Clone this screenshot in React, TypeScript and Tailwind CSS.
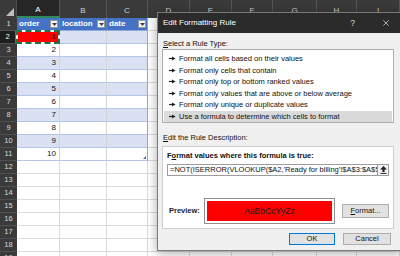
import React from 'react';
import { X } from 'lucide-react';

// Sheet columns, widths taken from the grid
const columns = [
  { label: 'A', w: 'w-[43px]' },
  { label: 'B', w: 'w-[47px]' },
  { label: 'C', w: 'w-[41px]' },
  { label: 'D', w: 'w-[42px]' },
  { label: 'E', w: 'w-[42px]' },
  { label: 'F', w: 'w-[41px]' },
  { label: 'G', w: 'w-[44px]' },
  { label: 'H', w: 'w-[40px]' },
  { label: 'I', w: 'w-[43px]' },
];

const headers = ['order', 'location', 'date'];

const ruleTypes = [
  'Format all cells based on their values',
  'Format only cells that contain',
  'Format only top or bottom ranked values',
  'Format only values that are above or below average',
  'Format only unique or duplicate values',
  'Use a formula to determine which cells to format',
];

const FilterButton = () => (
  <span className="ml-auto mr-[1px] flex h-[8px] w-[8px] shrink-0 items-center justify-center border border-[#9a9a9a] bg-[#f3f3f3]">
    <svg width="5" height="3" viewBox="0 0 5 3">
      <path d="M0 0h5L2.5 3z" fill="#404040" />
    </svg>
  </span>
);

const Bullet = () => (
  <svg width="7" height="5" viewBox="0 0 7 5" className="mr-[3px] shrink-0">
    <path d="M0 2.5h3.5" stroke="#222" strokeWidth="1.2" />
    <path d="M3 0.4L6.6 2.5L3 4.6z" fill="#222" />
  </svg>
);

const Cell = ({ row, col }: { row: number; col: number }) => {
  const w = columns[col].w;
  const inTable = col < 3 && row <= 11;

  if (inTable && row === 1) {
    return (
      <div
        className={`${w} flex h-full shrink-0 items-center border-b border-[#8eaadb] bg-[#4472c4] pl-[2px] text-[8px] font-bold text-white ${
          col === 2 ? 'border-r border-r-[#8eaadb]' : 'border-r border-r-[#5b84cc]'
        }`}
      >
        <span>{headers[col]}</span>
        <FilterButton />
      </div>
    );
  }

  if (inTable) {
    const banded = row % 2 === 0;
    const value = col === 0 ? String(row - 1) : '';
    const isActive = row === 2 && col === 0;
    return (
      <div
        className={`${w} relative flex h-full shrink-0 items-center justify-end border-b border-[#b4c6e7] pr-[3px] text-[8px] text-[#111] ${
          col === 2 ? 'border-r border-r-[#8eaadb]' : 'border-r border-r-[#d4d4d4]'
        } ${isActive ? 'bg-[#ff0000]' : banded ? 'bg-[#d9e1f2]' : 'bg-white'}`}
      >
        {isActive && (
          <>
            <span className="absolute -inset-[1px] border-2 border-white" />
            <span className="absolute -inset-[1px] border-2 border-dashed border-[#217346]" />
          </>
        )}
        <span className="relative z-10">{value}</span>
        {row === 11 && col === 2 && (
          <svg width="3" height="3" viewBox="0 0 3 3" className="absolute right-[1px] bottom-[1px]">
            <path d="M3 0v3H0z" fill="#4472c4" />
          </svg>
        )}
      </div>
    );
  }

  return <div className={`${w} h-full shrink-0 border-r border-b border-[#dadada] bg-white`} />;
};

const Sheet = () => (
  <div className="flex flex-col" style={{ fontFamily: '"Liberation Sans", Arial, sans-serif' }}>
    {/* Column headers */}
    <div className="flex h-[18px] bg-[#3a3a3a]">
      <div className="relative w-[17px] shrink-0 border-r border-[#4e4e4e]">
        <svg width="8" height="8" viewBox="0 0 8 8" className="absolute right-[2px] bottom-[2px]">
          <path d="M8 0v8H0z" fill="#bfbfbf" />
        </svg>
      </div>
      {columns.map((c, i) => (
        <div
          key={c.label}
          className={`${c.w} flex shrink-0 items-center justify-center border-r border-[#555] pt-[3px] text-[8px] ${
            i === 0 ? 'border-b-2 border-b-[#2e8b57] bg-[#262626] text-white' : 'text-[#d0d0d0]'
          }`}
        >
          {c.label}
        </div>
      ))}
    </div>
    {/* Rows */}
    {Array.from({ length: 19 }, (_, r) => r + 1).map((row) => (
      <div key={row} className="flex h-[13px]">
        <div
          className={`flex w-[17px] shrink-0 items-center justify-center border-b border-[#505050] text-[7.5px] ${
            row === 2 ? 'border-r-2 border-r-[#2e8b57] bg-[#1f1f1f] text-white' : 'bg-[#3a3a3a] text-[#dcdcdc]'
          }`}
        >
          {row}
        </div>
        {columns.map((_, col) => (
          <Cell key={col} row={row} col={col} />
        ))}
      </div>
    ))}
  </div>
);

const Dialog = () => (
  <div
    className="absolute top-[12px] left-[157px] flex w-[245px] flex-col border border-[#7a7a7a] bg-[#f0f0f0] shadow-[0_2px_10px_rgba(0,0,0,0.35)]"
    style={{ fontFamily: '"Liberation Sans", Arial, sans-serif' }}
  >
    {/* Title bar */}
    <div className="flex h-[20px] items-center bg-[#2b2b2b] pl-[5px] text-[8px] text-white">
      <span>Edit Formatting Rule</span>
      <span className="ml-auto mr-[26px] text-[8.5px] text-[#d8d8d8]">?</span>
      <X size={10} strokeWidth={1.6} className="mr-[10px] text-[#e8e8e8]" />
    </div>

    <div className="flex flex-col px-[4px] text-[7.5px] text-[#111]">
      <div className="mt-[6px] flex h-[10px] items-center pl-[1px]">
        <span className="underline">S</span>elect a Rule Type:
      </div>

      {/* Rule type list */}
      <div className="flex h-[74px] w-[232px] flex-col border border-[#acacac] bg-white px-[1px] pt-[3px]">
        {ruleTypes.map((t, i) => (
          <div
            key={t}
            className={`flex h-[11.5px] items-center pl-[5px] ${i === ruleTypes.length - 1 ? 'bg-[#dadada]' : ''}`}
          >
            <Bullet />
            <span className="whitespace-nowrap">{t}</span>
          </div>
        ))}
      </div>

      <div className="mt-[10px] flex h-[10px] items-center pl-[1px]">
        <span className="underline">E</span>dit the Rule Description:
      </div>

      {/* Rule description panel */}
      <div className="mt-[3px] flex h-[83px] w-[232px] flex-col border border-[#cfcfcf] bg-white px-[4px] pt-[4px]">
        <div className="flex h-[10px] items-center font-bold">
          F<span className="underline">o</span>rmat values where this formula is true:
        </div>
        <div className="mt-[3px] flex h-[12px]">
          <div className="flex w-[212px] items-center overflow-hidden border border-[#9c9c9c] pl-[2px] text-[7.5px] whitespace-nowrap">
            =NOT(ISERROR(VLOOKUP($A2,'Ready for billing'!$A$3:$A$5,'
          </div>
          <div className="flex w-[11px] items-center justify-center border border-l-0 border-[#9c9c9c] bg-[#f5f5f5]">
            <svg width="7" height="8" viewBox="0 0 7 8">
              <path d="M3.5 0L7 3.5H4.6V6H2.4V3.5H0z" fill="#222" />
              <path d="M0.5 7.4h6" stroke="#222" strokeWidth="1" />
            </svg>
          </div>
        </div>
        <div className="mt-[22px] flex items-center">
          <span className="ml-[2px] w-[35px] text-[7.5px] font-bold text-[#222]">Preview:</span>
          <div className="flex h-[26px] w-[131px] items-center justify-center border border-[#8f8f8f] p-[2px]">
            <div className="flex h-full w-full items-center justify-center bg-[#ff0000] text-[8.5px] text-[#1a1a1a]">
              AaBbCcYyZz
            </div>
          </div>
          <button className="ml-[7px] flex h-[14px] w-[47px] items-center justify-center border border-[#adadad] bg-[#e1e1e1] text-[7.5px]">
            <span className="underline">F</span>ormat...
          </button>
        </div>
      </div>

      {/* Footer buttons */}
      <div className="mt-[4px] mb-[5px] flex justify-end gap-[8px] pr-[6px]">
        <button className="flex h-[12px] w-[46px] items-center justify-center border border-[#0078d7] bg-[#e1e1e1] text-[7.5px]">
          OK
        </button>
        <button className="flex h-[12px] w-[48px] items-center justify-center border border-[#adadad] bg-[#e1e1e1] text-[7.5px]">
          Cancel
        </button>
      </div>
    </div>
  </div>
);

export default function App() {
  return (
    <div className="relative h-[256px] w-[400px] overflow-hidden bg-white">
      <Sheet />
      <Dialog />
    </div>
  );
}
